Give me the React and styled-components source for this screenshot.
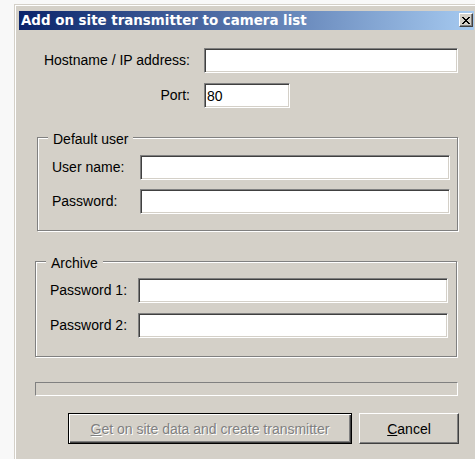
import React from "react";
import styled, { createGlobalStyle } from "styled-components";

const GlobalStyle = createGlobalStyle`
  html, body {
    margin: 0;
    padding: 0;
    background: #f8f8f8;
    overflow: hidden;
  }
  body {
    font-family: "Liberation Sans", Arial, sans-serif;
    font-size: 14px;
    color: #000;
  }
`;

const Window = styled.div`
  box-sizing: border-box;
  margin: 4px 0 0 14px;
  width: 465px;
  height: 470px;
  background: #d4d0c8;
  border: 1px solid #d4d0c8;
  border-right-color: #404040;
  border-bottom-color: #404040;
  box-shadow: inset 1px 1px #fff;
  padding: 6px 4px 0 4px;
`;

const TitleBar = styled.div`
  display: flex;
  align-items: flex-start;
  height: 19px;
  padding: 0 1px 0 2px;
  background: linear-gradient(to right, #0a246a, #a6caf0);
`;

const Title = styled.div`
  flex: 1;
  padding-top: 1px;
  line-height: 18px;
  color: #fff;
  font-family: "DejaVu Sans", Verdana, sans-serif;
  font-weight: bold;
  font-size: 13.4px;
  white-space: nowrap;
`;

const CloseButton = styled.div`
  box-sizing: border-box;
  width: 14px;
  height: 14px;
  margin-top: 2px;
  display: flex;
  align-items: center;
  justify-content: center;
  background: #d4d0c8;
  border: 1px solid;
  border-color: #fff #404040 #404040 #fff;
  box-shadow: inset -1px -1px #808080;
`;

const Content = styled.div`
  width: 440px;
`;

const FieldGrid = styled.div`
  display: grid;
  grid-template-columns: 171px max-content;
  column-gap: 14px;
  row-gap: 10px;
  align-items: center;
  margin-top: 18px;
`;

const Label = styled.label`
  line-height: 25px;
  white-space: nowrap;
  text-align: ${(p) => (p.$right ? "right" : "left")};
`;

const TextBox = styled.input`
  box-sizing: border-box;
  width: ${(p) => p.$width}px;
  height: 25px;
  margin: 0;
  padding: 0 2px;
  background: #fff;
  border: 1px solid;
  border-color: #808080 #fff #fff #808080;
  box-shadow: inset 1px 1px #404040, inset -1px -1px #d4d0c8;
  font-family: "Liberation Sans", Arial, sans-serif;
  font-size: 14px;
  color: #000;
  outline: none;
`;

const GroupBox = styled.div`
  position: relative;
  box-sizing: border-box;
  margin: ${(p) => p.$top}px 0 0 ${(p) => p.$left}px;
  width: ${(p) => p.$width}px;
  padding: ${(p) => p.$padTop}px 0 ${(p) => p.$padBottom}px 14px;
  border: 1px solid #808080;
  box-shadow: inset 1px 1px #fff, 1px 1px #fff;
`;

const Legend = styled.span`
  position: absolute;
  top: -7px;
  left: 10px;
  padding: 0 5px;
  line-height: 16px;
  background: #d4d0c8;
  white-space: nowrap;
`;

const GroupGrid = styled.div`
  display: grid;
  grid-template-columns: 88px 310px;
  row-gap: ${(p) => p.$gap}px;
  align-items: center;
`;

const Progress = styled.div`
  box-sizing: border-box;
  margin: 25px 0 0 16px;
  width: 423px;
  height: 14px;
  border: 1px solid;
  border-color: #808080 #fff #fff #808080;
`;

const ButtonRow = styled.div`
  display: flex;
  gap: 7px;
  margin-top: 17px;
  padding-left: 49px;
`;

const Button = styled.button`
  box-sizing: border-box;
  width: ${(p) => p.$width}px;
  height: 31px;
  margin: 0;
  padding: 0;
  background: #d4d0c8;
  font-family: "Liberation Sans", Arial, sans-serif;
  font-size: 14px;
  color: #000;
  border: 1px solid;
  border-color: #fff #404040 #404040 #fff;
  box-shadow: inset -1px -1px #808080;
  &:disabled {
    color: #808080;
    text-shadow: 1px 1px #fff;
  }
  ${(p) =>
    p.$default &&
    `
    border-color: #000;
    box-shadow: inset 1px 1px #fff, inset -1px -1px #404040, inset -2px -2px #808080;
  `}
`;

const CloseGlyph = () => (
  <svg width="8" height="7" viewBox="0 0 8 7" shapeRendering="crispEdges">
    <path
      d="M0 0h2v1H0zM6 0h2v1H6zM1 1h2v1H1zM5 1h2v1H5zM2 2h4v1H2zM3 3h2v1H3zM2 4h4v1H2zM1 5h2v1H1zM5 5h2v1H5zM0 6h2v1H0zM6 6h2v1H6z"
      fill="#000"
    />
  </svg>
);

export default function App() {
  return (
    <>
      <GlobalStyle />
      <Window>
        <TitleBar>
          <Title>Add on site transmitter to camera list</Title>
          <CloseButton>
            <CloseGlyph />
          </CloseButton>
        </TitleBar>
        <Content>
          <FieldGrid>
            <Label $right>Hostname / IP address:</Label>
            <TextBox $width={254} defaultValue="" />
            <Label $right>Port:</Label>
            <TextBox $width={86} defaultValue="80" />
          </FieldGrid>

          <GroupBox $top={29} $left={18} $width={421} $padTop={17} $padBottom={16}>
            <Legend>Default user</Legend>
            <GroupGrid $gap={9}>
              <Label>User name:</Label>
              <TextBox $width={310} />
              <Label>Password:</Label>
              <TextBox $width={310} type="password" />
            </GroupGrid>
          </GroupBox>

          <GroupBox $top={30} $left={16} $width={422} $padTop={16} $padBottom={18}>
            <Legend>Archive</Legend>
            <GroupGrid $gap={10}>
              <Label>Password 1:</Label>
              <TextBox $width={310} type="password" />
              <Label>Password 2:</Label>
              <TextBox $width={310} type="password" />
            </GroupGrid>
          </GroupBox>

          <Progress />

          <ButtonRow>
            <Button $width={284} $default disabled>
              <u>G</u>et on site data and create transmitter
            </Button>
            <Button $width={100}>
              <u>C</u>ancel
            </Button>
          </ButtonRow>
        </Content>
      </Window>
    </>
  );
}
